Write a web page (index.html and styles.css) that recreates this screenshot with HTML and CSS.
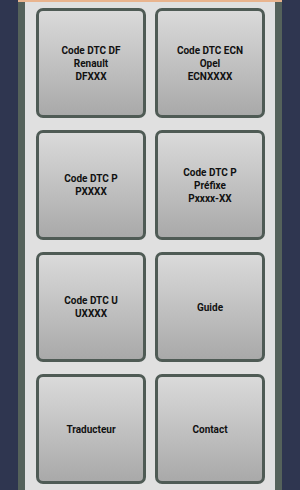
FILE: index.html
```html
<!DOCTYPE html>
<html lang="fr">
<head>
  <meta charset="UTF-8" />
  <meta name="viewport" content="width=device-width, initial-scale=1" />
  <title>Codes DTC</title>
  <link rel="stylesheet" href="styles.css">
</head>
<body>
  <div class="frame">
    <div class="menu">
      <button class="tile">Code DTC DF<br>Renault<br>DFXXX</button>
      <button class="tile">Code DTC ECN<br>Opel<br>ECNXXXX</button>
      <button class="tile">Code DTC P<br>PXXXX</button>
      <button class="tile">Code DTC P<br>Préfixe<br>Pxxxx-XX</button>
      <button class="tile">Code DTC U<br>UXXXX</button>
      <button class="tile">Guide</button>
      <button class="tile">Traducteur</button>
      <button class="tile">Contact</button>
    </div>
  </div>
</body>
</html>
```

FILE: styles.css
```css
body {
  margin: 0;
  background: #2f3650;
  font-family: Roboto, "Liberation Sans", sans-serif;
  height: 490px;
  overflow: hidden;
}
.frame {
  width: 250px;
  height: 490px;
  margin: 0 auto;
  padding: 0 7px;
  background: #55625b;
  border-top: 2px solid #e9b48e;
}
.menu {
  display: grid;
  grid-template-columns: 110px 110px;
  grid-auto-rows: 110px;
  column-gap: 9px;
  row-gap: 12px;
  height: 100%;
  padding: 6px 0 0 11px;
  background: #e0e0e0;
  box-sizing: border-box;
}
.tile {
  border: 3px solid #4f5b55;
  border-radius: 7px;
  background: linear-gradient(180deg, #dadada, #a9a9a9);
  color: #111;
  font-family: inherit;
  font-size: 10px;
  font-weight: bold;
  line-height: 13px;
  text-align: center;
  padding: 0;
  cursor: pointer;
}
```
